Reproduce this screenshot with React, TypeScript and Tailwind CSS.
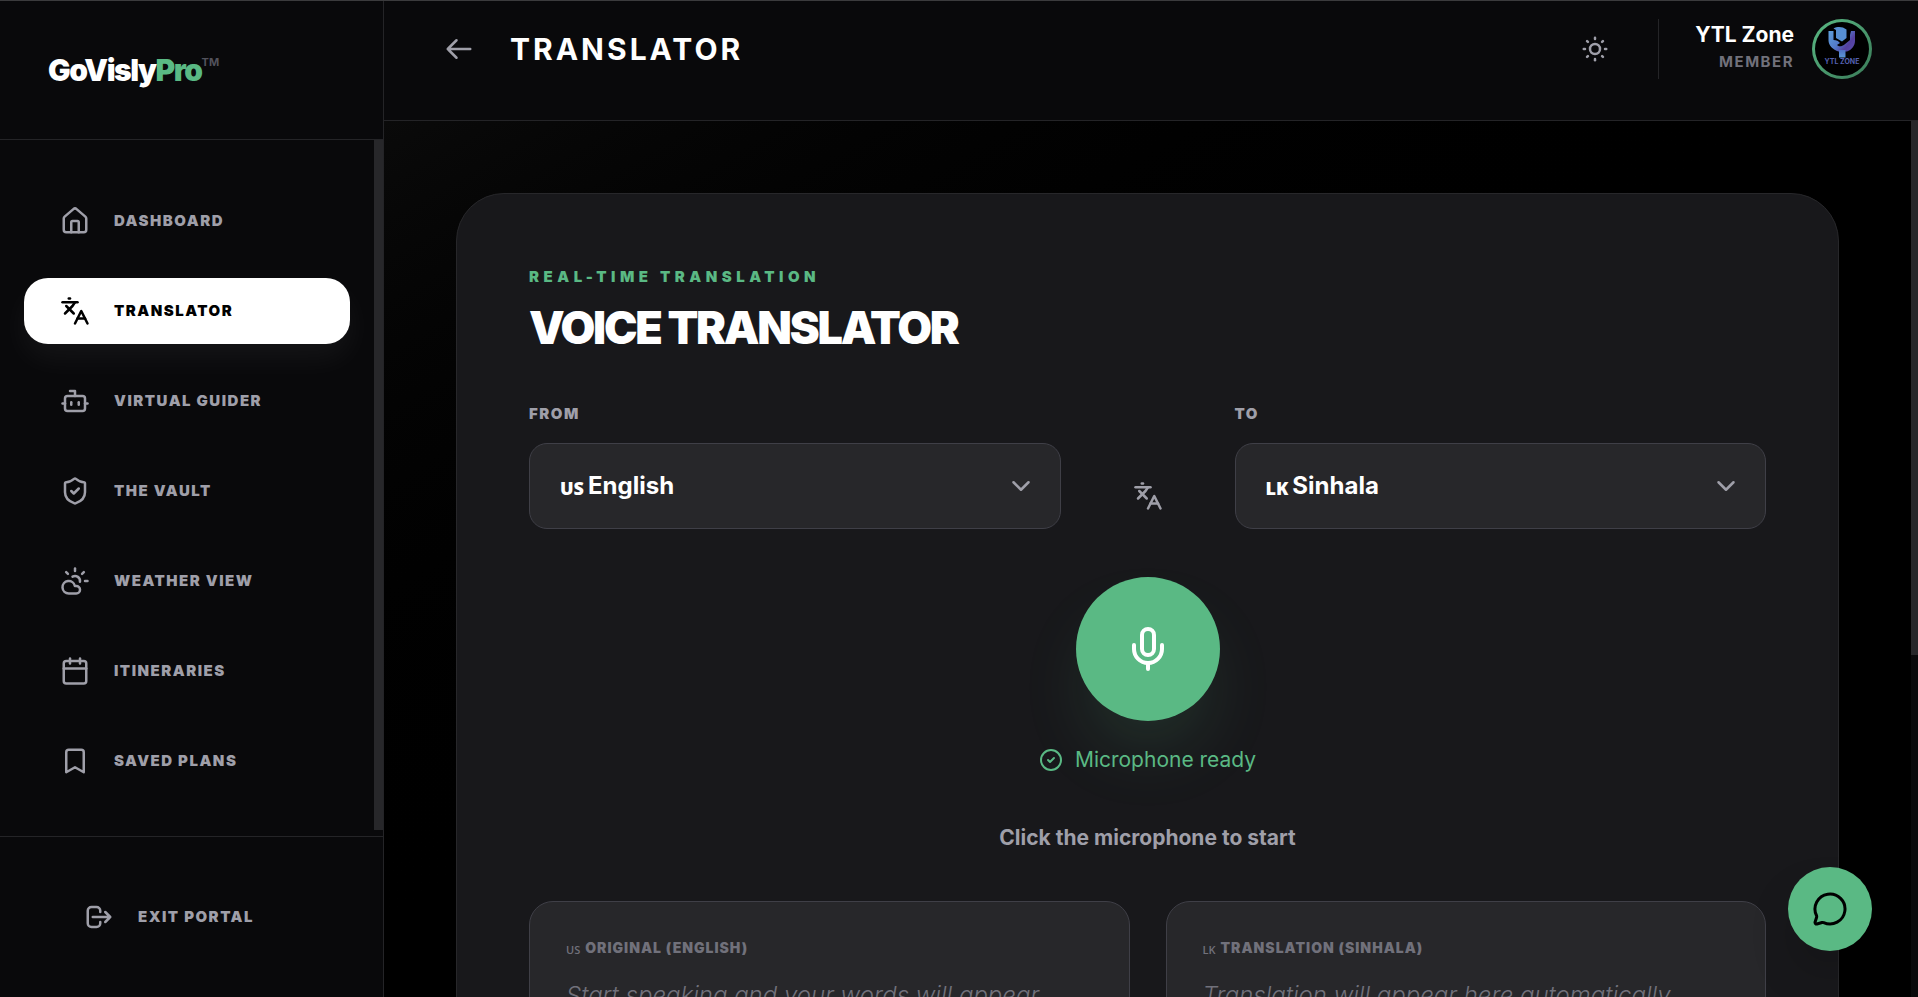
import { useState, memo } from 'react';
import type { ReactNode } from 'react';
import {
  Bot,
  Calendar,
  ChevronDown,
  CircleCheck,
  CloudSun,
  House,
  Languages,
  MessageCircle,
  Mic,
  ShieldCheck,
  SunMedium,
} from 'lucide-react';

const languages = [
  { code: 'US', name: 'English' },
  { code: 'LK', name: 'Sinhala' },
  { code: 'FR', name: 'French' },
  { code: 'DE', name: 'German' },
];

const StrokeIcon = ({ d }: { d: string }) => (
  <svg
    className="size-[30px] shrink-0"
    viewBox="0 0 24 24"
    fill="none"
    stroke="currentColor"
    strokeWidth="2"
    strokeLinecap="round"
    strokeLinejoin="round"
    aria-hidden="true"
  >
    <path d={d} />
  </svg>
);

const navItems: { label: string; icon: ReactNode }[] = [
  { label: 'Dashboard', icon: <House size={30} /> },
  { label: 'Translator', icon: <Languages size={30} /> },
  { label: 'Virtual Guider', icon: <Bot size={30} /> },
  { label: 'The Vault', icon: <ShieldCheck size={30} /> },
  { label: 'Weather View', icon: <CloudSun size={30} /> },
  { label: 'Itineraries', icon: <Calendar size={30} /> },
  { label: 'Saved Plans', icon: <StrokeIcon d="m19 21-7-4-7 4V5a2 2 0 0 1 2-2h10a2 2 0 0 1 2 2v16z" /> },
];

const Sidebar = ({ active, onSelect }: { active: string; onSelect: (label: string) => void }) => (
  <aside className="flex w-96 shrink-0 flex-col border-r border-[#242427] bg-[#09090b]">
    <div className="flex h-[139px] shrink-0 items-center border-b border-[#242427] px-12">
      <a href="#" className="flex items-start text-[30px] leading-9 font-black tracking-tighter text-white">
        <span>
          GoVisly<span className="text-[#5ab984]">Pro</span>
        </span>
        <span className="mt-1 text-[11px] leading-3 font-bold tracking-normal text-zinc-600">TM</span>
      </a>
    </div>

    <div className="flex min-h-0 flex-1">
      <nav className="flex flex-1 flex-col gap-6 overflow-hidden px-6 py-12">
        {navItems.map((item) => (
          <a
            key={item.label}
            href="#"
            onClick={() => onSelect(item.label)}
            className={`flex h-[66px] shrink-0 items-center gap-6 rounded-3xl px-9 text-[15px] font-black tracking-widest uppercase ${
              item.label === active
                ? 'bg-white text-black shadow-[0_15px_30px_rgba(255,255,255,0.05)]'
                : 'text-zinc-400 hover:text-white'
            }`}
          >
            {item.icon}
            <span>{item.label}</span>
          </a>
        ))}
      </nav>
      <div className="w-[9px] pb-1.5" aria-hidden="true">
        <div className="h-full bg-zinc-800" />
      </div>
    </div>

    <div className="flex h-[161px] shrink-0 items-center border-t border-[#242427] px-12">
      <button
        type="button"
        className="flex items-center gap-6 px-9 text-[15px] font-black tracking-widest text-zinc-400 uppercase hover:text-white"
      >
        <StrokeIcon d="M17 16l4-4m0 0l-4-4m4 4H7m6 4v1a3 3 0 01-3 3H6a3 3 0 01-3-3V7a3 3 0 013-3h4a3 3 0 013 3v1" />
        <span>Exit Portal</span>
      </button>
    </div>
  </aside>
);

const Avatar = () => (
  <div className="size-[60px] rounded-full bg-linear-to-br from-[#5ab984] to-[#3a7a58] p-[3px]">
    <svg className="size-full rounded-full bg-black" viewBox="0 0 54 54" role="img" aria-label="YTL Zone">
      <defs>
        <linearGradient id="hand" x1="14" y1="9" x2="40" y2="30" gradientUnits="userSpaceOnUse">
          <stop offset="0" stopColor="#5f9fdb" />
          <stop offset="0.45" stopColor="#5279c8" />
          <stop offset="0.7" stopColor="#54409f" />
          <stop offset="1" stopColor="#5a4fb0" />
        </linearGradient>
        <linearGradient id="stem" x1="0" y1="0" x2="0" y2="1">
          <stop offset="0" stopColor="#4f6fc2" />
          <stop offset="1" stopColor="#5b97d6" />
        </linearGradient>
      </defs>
      <path
        d="M13.500 9h5v9c3 0 5 1 6.500 3l-3 2c2 2 5 1.500 7.500-.500l5.500-4.500V13l1-4h4v10c0 5-3.500 9-8 10.500h-8.500c-5.500-2-10-6-10-11z"
        fill="url(#hand)"
      />
      <path d="M24 28h6.500v7.500H24z" fill="url(#stem)" />
      <path d="M18.500 6.500c4-2.200 9-2 13 1V16L27 19.500 21 16V8z" fill="#578fd2" />
      <text
        x="27"
        y="42"
        textAnchor="middle"
        fontSize="7"
        fontWeight="700"
        fontFamily="Inter, sans-serif"
        fill="#5560b0"
      >
        YTL ZONE
      </text>
    </svg>
  </div>
);

const Header = () => (
  <header className="flex shrink-0 items-center justify-between border-b border-[#242427] bg-[#09090b] pt-[18px] pr-[46px] pb-[41px] pl-12">
    <div className="flex items-center gap-6">
      <button type="button" aria-label="Back" className="p-3 text-zinc-400 hover:text-white">
        <StrokeIcon d="M10 19l-7-7m0 0l7-7m-7 7h18" />
      </button>
      <h1 className="text-[30px] leading-10 font-bold tracking-widest text-white uppercase">Translator</h1>
    </div>

    <div className="flex items-center gap-9">
      <button type="button" aria-label="Toggle theme" className="p-3 text-zinc-400 hover:text-white">
        <SunMedium size={30} />
      </button>
      <div className="flex items-start gap-[18px] border-l border-[#242427] pl-9">
        <div className="text-right">
          <p className="text-[21px] leading-8 font-bold text-white">YTL Zone</p>
          <p className="text-[15px] leading-[22px] font-bold tracking-widest text-zinc-500 uppercase">Member</p>
        </div>
        <Avatar />
      </div>
    </div>
  </header>
);

interface LanguageSelectProps {
  id: string;
  label: string;
  value: string;
  onChange: (code: string) => void;
}

const LanguageSelect = ({ id, label, value, onChange }: LanguageSelectProps) => (
  <div className="flex min-w-0 flex-1 flex-col gap-[18px]">
    <label htmlFor={id} className="text-[15px] leading-[22px] font-black tracking-widest text-zinc-400 uppercase">
      {label}
    </label>
    <div className="flex h-[86px] items-center gap-1 rounded-[18px] border border-zinc-700 bg-zinc-800 px-[30px]">
      <span className="mt-1 font-['Open_Sans',sans-serif] text-[18px] leading-8 font-extrabold text-white">{value}</span>
      <select
        id={id}
        value={value}
        onChange={(e) => onChange(e.target.value)}
        className="h-full flex-1 appearance-none bg-transparent text-[24px] font-bold text-white outline-none"
      >
        {languages.map((language) => (
          <option key={language.code} value={language.code} className="bg-zinc-800">
            {language.name}
          </option>
        ))}
      </select>
      <ChevronDown size={30} className="pointer-events-none -mr-1.5 text-zinc-400" />
    </div>
  </div>
);

const TranscriptPanel = ({ code, title, placeholder }: { code: string; title: string; placeholder: string }) => (
  <section className="min-h-[300px] rounded-3xl border border-zinc-700 bg-zinc-800 p-9">
    <h3 className="flex items-center gap-[5px] text-[14px] leading-5 font-black tracking-[1px] text-zinc-500 uppercase">
      <span className="mt-1 font-['Open_Sans',sans-serif] text-[11px] leading-4 font-semibold tracking-normal">{code}</span>
      {title}
    </h3>
    <p className="mt-5 text-[24px] leading-9 font-light text-zinc-500 italic">{placeholder}</p>
  </section>
);

const Translator = memo(() => {
  const [from, setFrom] = useState('US');
  const [to, setTo] = useState('LK');

  const nameOf = (code: string) => languages.find((language) => language.code === code)?.name;

  const swap = () => {
    setFrom(to);
    setTo(from);
  };

  return (
    <div className="rounded-[48px] border border-zinc-800 bg-zinc-900 p-[72px]">
      <p className="text-[15px] leading-[22px] font-black tracking-[0.3em] text-[#5ab984] uppercase">
        Real-Time Translation
      </p>
      <h2 className="mt-[13px] text-[45px] leading-[54px] font-black tracking-tighter text-white uppercase">
        Voice Translator
      </h2>

      <div className="mt-12 flex items-end gap-[54px]">
        <LanguageSelect id="from" label="From" value={from} onChange={setFrom} />
        <button
          type="button"
          onClick={swap}
          aria-label="Swap languages"
          className="p-[18px] text-zinc-400 hover:text-white"
        >
          <Languages size={30} />
        </button>
        <LanguageSelect id="to" label="To" value={to} onChange={setTo} />
      </div>

      <div className="mt-12 flex flex-col items-center">
        <button
          type="button"
          aria-label="Start recording"
          className="flex size-36 items-center justify-center rounded-full bg-[#5ab984] text-white shadow-[0_38px_75px_-18px_rgba(90,185,132,0.2)]"
        >
          <Mic size={48} />
        </button>
        <p className="mt-6 flex items-center gap-3 text-[21px] leading-[30px] text-[#5ab984]">
          <CircleCheck size={24} />
          Microphone ready
        </p>
        <p className="mt-12 text-[21px] leading-[30px] font-bold text-zinc-400">Click the microphone to start</p>
      </div>

      <div className="mt-12 grid grid-cols-2 gap-9">
        <TranscriptPanel
          code={from}
          title={`Original (${nameOf(from)})`}
          placeholder="Start speaking and your words will appear here..."
        />
        <TranscriptPanel
          code={to}
          title={`Translation (${nameOf(to)})`}
          placeholder="Translation will appear here automatically"
        />
      </div>
    </div>
  );
});

Translator.displayName = 'Translator';

export default function App() {
  const [active, setActive] = useState('Translator');

  return (
    <div className="flex h-screen overflow-hidden border-t border-[#3b3b3d] bg-black font-[Inter,sans-serif] antialiased">
      <Sidebar active={active} onSelect={setActive} />

      <div className="flex min-w-0 flex-1 flex-col">
        <Header />
        <div className="flex min-h-0 flex-1">
          <main className="flex-1 overflow-hidden bg-linear-to-br from-[#0a0a0a] to-black to-50% p-[72px]">
            <Translator />
          </main>
          <div className="w-[7px] bg-[#09090b]" aria-hidden="true">
            <div className="h-[61%] bg-zinc-800" />
          </div>
        </div>
      </div>

      <button
        type="button"
        aria-label="Open chat"
        className="fixed right-[46px] bottom-[46px] flex size-[84px] items-center justify-center rounded-full bg-[#5ab984] text-black shadow-2xl"
      >
        <MessageCircle size={36} />
      </button>
    </div>
  );
}
